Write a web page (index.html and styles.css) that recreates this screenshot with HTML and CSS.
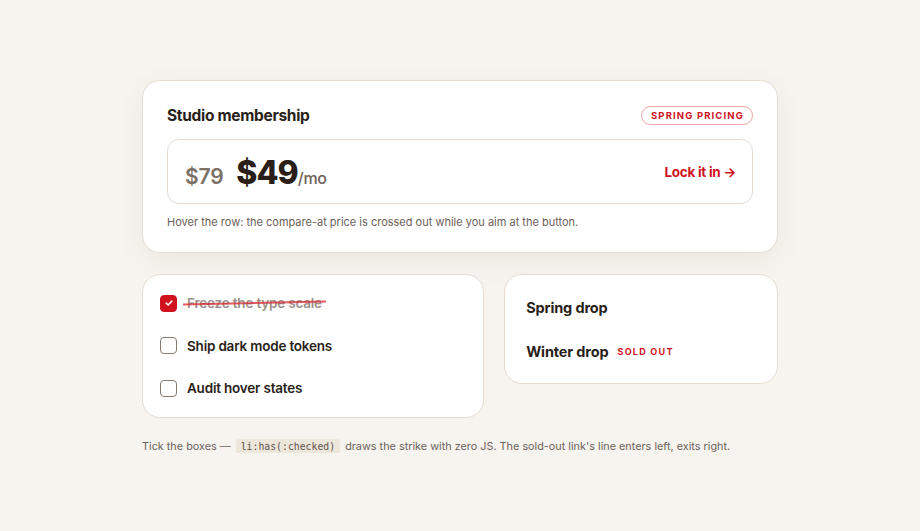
FILE: index.html
```html
<!DOCTYPE html>
<html lang="en">
<head>
<meta charset="utf-8">
<title>Studio membership</title>
<link rel="stylesheet" href="styles.css">
</head>
<body>
<main class="wrap">
  <section class="card plan">
    <header class="plan-head">
      <h2 class="plan-title">Studio membership</h2>
      <span class="badge">Spring pricing</span>
    </header>
    <div class="price-row">
      <div class="prices">
        <span class="was">$79</span>
        <span class="now">$49<span class="per">/mo</span></span>
      </div>
      <a class="lock" href="#">Lock it in →</a>
    </div>
    <p class="note">Hover the row: the compare-at price is crossed out while you aim at the button.</p>
  </section>

  <div class="grid">
    <ul class="card tasks">
      <li class="task done"><span class="box checked"><svg viewBox="0 0 12 12" width="10" height="10"><path d="M2.6 6.2 L5 8.4 L9.4 3.8" fill="none" stroke="#fff" stroke-width="1.9" stroke-linecap="round" stroke-linejoin="round"/></svg></span><span class="label">Freeze the type scale</span></li>
      <li class="task"><span class="box"></span><span class="label">Ship dark mode tokens</span></li>
      <li class="task"><span class="box"></span><span class="label">Audit hover states</span></li>
    </ul>
    <div class="card drops">
      <div class="drop">Spring drop</div>
      <div class="drop">Winter drop <span class="sold">Sold out</span></div>
    </div>
  </div>

  <p class="foot">Tick the boxes — <code class="chip">li:has(:checked)</code> draws the strike with zero JS. The sold-out link's line enters left, exits right.</p>
</main>
</body>
</html>
```

FILE: styles.css
```css
* { box-sizing: border-box; }
html, body { margin: 0; padding: 0; }
body {
  background: #f7f4ef;
  font-family: Inter, "Noto Sans", sans-serif;
  color: #2a1e18;
}
.wrap {
  width: 636px;
  margin: 0 auto;
  padding-top: 80px;
}
.card {
  background: #fff;
  border: 1px solid #e4dcd2;
  border-radius: 18px;
}
.plan {
  padding: 23px 24px 0 24px;
  height: 173px;
  box-shadow: 0 8px 28px rgba(80, 55, 30, 0.07);
}
.plan-head {
  display: flex;
  align-items: center;
  justify-content: space-between;
  height: 22px;
}
.plan-title {
  margin: 0;
  font-size: 15.5px;
  font-weight: 700;
  letter-spacing: -0.02em;
  color: #2a1e18;
}
.badge {
  display: inline-flex;
  align-items: center;
  height: 19px;
  padding: 0 8px 0 9px;
  border: 1px solid #f0a5a8;
  border-radius: 10px;
  color: #d0121f;
  font-size: 9.5px;
  font-weight: 700;
  letter-spacing: 0.12em;
  text-transform: uppercase;
}
.price-row {
  margin-top: 13px;
  height: 65px;
  border: 1px solid #e4dcd2;
  border-radius: 12px;
  display: flex;
  align-items: center;
  justify-content: space-between;
  padding: 0 16px 0 17px;
}
.prices {
  display: flex;
  align-items: baseline;
  gap: 13px;
  padding-top: 2px;
}
.was {
  font-size: 21px;
  font-weight: 600;
  color: #7b6f66;
  letter-spacing: -0.01em;
}
.now {
  font-size: 32px;
  font-weight: 800;
  letter-spacing: -0.03em;
  color: #2a1e18;
}
.per {
  font-size: 16px;
  font-weight: 500;
  color: #6e6058;
  letter-spacing: -0.02em;
}
.lock {
  color: #d0121f;
  font-size: 13.5px;
  font-weight: 700;
  text-decoration: none;
  letter-spacing: -0.02em;
}
.note {
  margin: 11px 0 0 0;
  font-size: 11px;
  color: #6b615a;
}
.grid {
  display: grid;
  grid-template-columns: 1.25fr 1fr;
  gap: 20px;
  align-items: start;
  margin-top: 21px;
}
.tasks {
  list-style: none;
  margin: 0;
  padding: 7px 17px 7px 17px;
}
.task {
  display: flex;
  align-items: center;
  gap: 10px;
  height: 42.5px;
  font-size: 13.5px;
  font-weight: 600;
  letter-spacing: -0.015em;
  color: #2a1e18;
}
.box {
  width: 17px;
  height: 17px;
  border: 1.5px solid #857a72;
  border-radius: 4px;
  flex: none;
  display: flex;
  align-items: center;
  justify-content: center;
}
.box.checked {
  background: #d0121f;
  border-color: #d0121f;
}
.label { position: relative; }
.done .label { color: #9b928b; }
.done .label::after {
  content: "";
  position: absolute;
  left: -4px;
  right: -4px;
  top: 42%;
  height: 1.5px;
  background: rgba(216, 40, 50, 0.75);
  transform: rotate(-1.3deg);
}
.drops {
  padding: 10px 21px 10px 21px;
}
.drop {
  height: 44px;
  display: flex;
  align-items: center;
  font-size: 14.5px;
  font-weight: 700;
  letter-spacing: -0.01em;
  color: #2a1e18;
}
.sold {
  margin-left: 9px;
  color: #d0121f;
  font-size: 9px;
  font-weight: 700;
  letter-spacing: 0.14em;
  text-transform: uppercase;
}
.foot {
  margin: 21px 0 0 0;
  font-size: 10.85px;
  color: #6b615a;
}
.chip {
  font-family: "DejaVu Sans Mono", "Liberation Mono", monospace;
  font-size: 9.8px;
  background: #ede6db;
  color: #5d524b;
  border-radius: 4px;
  padding: 2px 5px;
  margin: 0 2px;
}
```
